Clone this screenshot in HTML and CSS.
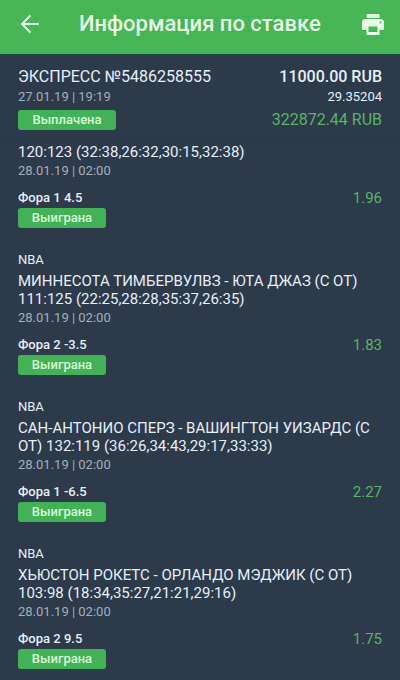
FILE: index.html
```html
<!DOCTYPE html>
<html lang="ru">
<head>
<meta charset="utf-8">
<meta name="viewport" content="width=device-width, initial-scale=1">
<title>Информация по ставке</title>
<link rel="stylesheet" href="styles.css">
</head>
<body>
<header class="bar">
  <button class="icon-button" type="button" aria-label="Назад">
    <svg width="20" height="20" viewBox="0 0 20 20" fill="none" stroke="currentColor" stroke-width="2"><path d="M20 10H3M11.500 1.500 3 10l8.500 8.500"/></svg>
  </button>
  <h1 class="bar-title">Информация по ставке</h1>
  <button class="icon-button" type="button" aria-label="Печать">
    <svg width="22" height="21" viewBox="0 0 22 21" fill="currentColor"><path d="M4.500 0h13v4h-13zM3.500 5h15A3.500 3.500 0 0 1 22 8.500V16h-4.500v5h-13v-5H0V8.500A3.500 3.500 0 0 1 3.500 5zM6.500 12.500V18h9v-5.500zM18.500 7.500a1 1 0 1 0 0 2 1 1 0 0 0 0-2z" fill-rule="evenodd"/></svg>
  </button>
</header>
<main>
  <section class="summary">
    <div class="row"><h2 class="title">ЭКСПРЕСС №5486258555</h2><span class="stake">11000.00 RUB</span></div>
    <div class="row"><span class="date">27.01.19 | 19:19</span><span class="odds">29.35204</span></div>
    <div class="row"><span class="badge badge-wide">Выплачена</span><span class="win">322872.44 RUB</span></div>
  </section>
  <section class="bets">
    <article class="bet">
      <h3 class="title">120:123 (32:38,26:32,30:15,32:38)</h3>
      <p class="date">28.01.19 | 02:00</p>
      <div class="row pick-row"><span class="pick">Фора 1 4.5</span><span class="win">1.96</span></div>
      <span class="badge">Выиграна</span>
    </article>
    <article class="bet">
      <p class="league">NBA</p>
      <h3 class="title">МИННЕСОТА ТИМБЕРВУЛВЗ - ЮТА ДЖАЗ (С ОТ) 111:125 (22:25,28:28,35:37,26:35)</h3>
      <p class="date">28.01.19 | 02:00</p>
      <div class="row pick-row"><span class="pick">Фора 2 -3.5</span><span class="win">1.83</span></div>
      <span class="badge">Выиграна</span>
    </article>
    <article class="bet">
      <p class="league">NBA</p>
      <h3 class="title">САН-АНТОНИО СПЕРЗ - ВАШИНГТОН УИЗАРДС (С ОТ) 132:119 (36:26,34:43,29:17,33:33)</h3>
      <p class="date">28.01.19 | 02:00</p>
      <div class="row pick-row"><span class="pick">Фора 1 -6.5</span><span class="win">2.27</span></div>
      <span class="badge">Выиграна</span>
    </article>
    <article class="bet">
      <p class="league">NBA</p>
      <h3 class="title">ХЬЮСТОН РОКЕТС - ОРЛАНДО МЭДЖИК (С ОТ) 103:98 (18:34,35:27,21:21,29:16)</h3>
      <p class="date">28.01.19 | 02:00</p>
      <div class="row pick-row"><span class="pick">Фора 2 9.5</span><span class="win">1.75</span></div>
      <span class="badge">Выиграна</span>
    </article>
  </section>
</main>
</body>
</html>
```
FILE: styles.css
```css
* { box-sizing: border-box; }
body {
  margin: 0;
  background: #2c3a4a;
  color: #e6eff7;
  font-family: Roboto, "Liberation Sans", sans-serif;
  font-size: 13px;
  line-height: 16px;
}
h1, h2, h3, p { margin: 0; }
.bar {
  display: flex;
  align-items: center;
  height: 54px;
  padding: 0 16px 6px 19px;
  background: #46b555;
  color: #e6ffe6;
  box-shadow: 0 1px 3px #1c4a38;
}
.icon-button {
  display: flex;
  padding: 0;
  border: 0;
  background: none;
  color: inherit;
}
.bar-title {
  flex: 1;
  padding-left: 40px;
  font-size: 22px;
  line-height: 24px;
  font-weight: 500;
}
.summary {
  padding: 14px 18px 12px;
  border-bottom: 1px solid #293646;
}
.row {
  display: flex;
  justify-content: space-between;
  align-items: center;
}
.title {
  font-size: 15px;
  line-height: 18px;
  font-weight: 400;
}
.stake {
  line-height: 18px;
  font-weight: 500;
}
.summary .date, .odds { padding: 3px 0 5px; }
.date { color: #a4afbb; }
.win {
  color: #58b566;
  font-size: 15px;
}
.summary .title, .summary .stake, .summary .win { font-size: 16px; }
.badge {
  display: block;
  width: 88px;
  border-radius: 3px;
  background: #43b257;
  color: #d6ffd9;
  font-weight: 500;
  line-height: 20px;
  text-align: center;
}
.badge-wide { width: 98px; }
.bets { padding: 0 18px; }
.bet { padding-bottom: 24px; }
.bet:last-child { padding-bottom: 11px; }
.league { padding-bottom: 4px; }
.bet .date { padding-top: 2px; }
.pick-row { padding: 11px 0 2px; }
.pick { font-weight: 500; }
```
